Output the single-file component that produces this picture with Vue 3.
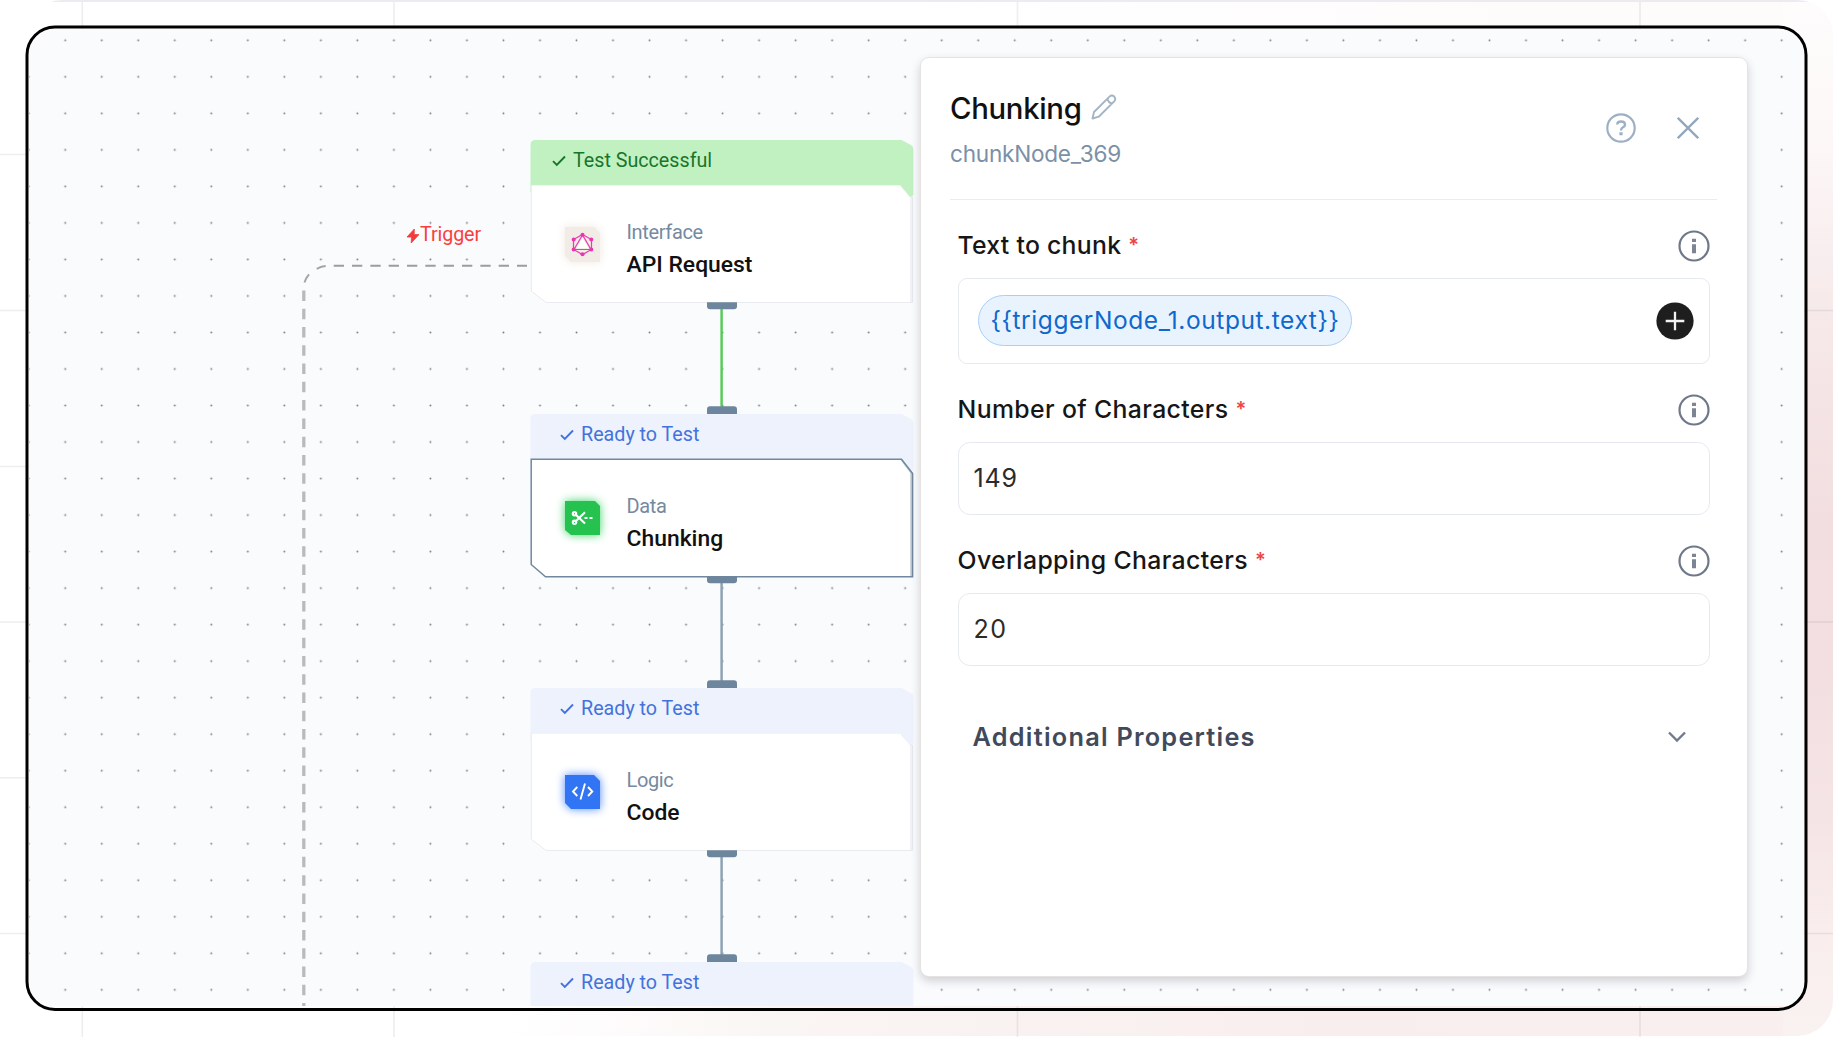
<script setup>
const nodes = [
  { id: 'api', top: 140, status: 'Test Successful', state: 'success', category: 'Interface', title: 'API Request', icon: 'graph' },
  { id: 'chunk', top: 414, status: 'Ready to Test', state: 'ready', category: 'Data', title: 'Chunking', icon: 'cut', selected: true },
  { id: 'code', top: 688, status: 'Ready to Test', state: 'ready', category: 'Logic', title: 'Code', icon: 'code' },
  { id: 'next', top: 962, status: 'Ready to Test', state: 'ready' },
]
const edges = [
  { y: 302, color: '#5acb5b' },
  { y: 576, color: '#8ea2b4' },
  { y: 850, color: '#8ea2b4' },
]
const variable = '{{triggerNode_1.output.text}}'
const fields = [
  { id: 'count', label: 'Number of Characters', value: '149' },
  { id: 'overlap', label: 'Overlapping Characters', value: '20' },
]
</script>

<template>
  <main class="page">
    <div class="section-glow"></div>
    <svg class="page-grid" width="1833" height="1037">
      <path d="M82.300 2V1037M394 2V1037M1017.500 2V1037M1640 2V1037" stroke="#0f0f1a" stroke-opacity=".07" stroke-width="1.600" />
      <path d="M0 154.500H40M0 310.500H1833M0 466.500H40M0 622H1833M0 777.700H40M0 933.500H1833" stroke="#0f0f1a" stroke-opacity=".07" stroke-width="1.400" />
    </svg>

    <section class="frame">
      <div class="canvas">
        <svg class="wires" width="1775" height="977" viewBox="29 29 1775 977">
          <defs>
            <pattern id="dots" x="10.450" y="22.050" width="36.520" height="36.520" patternUnits="userSpaceOnUse">
              <circle cx="18.260" cy="18.260" r=".95" fill="#7b7d81" />
            </pattern>
          </defs>
          <rect x="29" y="29" width="1775" height="977" fill="url(#dots)" />
          <path d="M333.700 265.800H527" stroke="#9c9da0" stroke-width="2" stroke-dasharray="10.300 8.030" />
          <path d="M316.700 268.800L320 267.300Q322.500 266.300 325.700 266M304.500 282.500Q305.800 278 309 274.300" stroke="#a4a5a8" stroke-width="2" fill="none" />
          <path d="M303.800 290.500V1006" stroke="#b9babc" stroke-width="3.300" stroke-dasharray="10.500 7.770" />
        </svg>

        <div class="trigger">
          <svg width="12" height="14" viewBox="0 0 12 14"><path d="M7.300 0L0 8H4.500L4.200 14L12 5.600H7.200Z" fill="#f43b3b" stroke="#f43b3b" stroke-width=".8" /></svg>
          <span>Trigger</span>
        </div>

        <article v-for="n in nodes" :key="n.id" class="node" :class="n.state" :style="{ top: n.top - 29 + 'px' }">
          <svg class="shape" width="386" height="166" viewBox="0 0 386 166">
            <path class="head-fill" :d="n.title ? 'M.5 52V5Q.5 0 5.500 0H371.500L381 5Q383.300 6.500 383.300 9V54Q383 57 380 57L370 45Z' : 'M.5 60V5Q.5 0 5.500 0H371.500L381 5Q383.300 6.500 383.300 9V60Z'" />
            <template v-if="n.title">
              <path v-if="!n.selected" d="M1.300 45.500V151L16 162.300H382.500V57L379.700 57L370 45.500Z" fill="#f1f2f5" stroke="#e6e8eb" stroke-width="1" />
              <path v-if="!n.selected" d="M1.800 45.500H370L380 57.300V162H16L1.800 151Z" fill="#fff" />
              <template v-else>
                <path d="M370 45H372L383 59V163H379Z" fill="#c3ced8" />
                <path d="M1.500 45.200H370L380.200 59V162H16L1.500 150Z" fill="#fff" />
                <path d="M1.200 45.200H371.500L382.600 59.500V162.800H15.500L1.200 150.500Z" fill="none" stroke="#71889e" stroke-width="1.500" />
              </template>
            </template>
          </svg>
          <header class="status">
            <svg width="14" height="12" viewBox="0 0 14 12" fill="none"><path d="M1 6.200L4.800 10L13 1.500" stroke="currentColor" stroke-width="1.900" /></svg>
            <span>{{ n.status }}</span>
          </header>
          <div v-if="n.title" class="body">
            <span class="tile" :class="n.icon">
              <svg v-if="n.icon === 'graph'" width="35" height="35" viewBox="0 0 35 35">
                <path d="M0 0H29L35 6V35H6L0 29Z" fill="#f1ece6" />
                <path d="M17.500 7.500L26.500 12.500V22.500L17.500 27.500L8.500 22.500V12.500ZM17.500 8L9 22.500H26Z" fill="none" stroke="#ea3bb2" stroke-width="1.200" />
                <path d="M17.500 11L23.500 21H11.500Z" fill="#fff" />
                <g fill="#ea35b0"><circle cx="17.500" cy="7.800" r="2" /><circle cx="26.300" cy="12.600" r="2" /><circle cx="26.300" cy="22.400" r="2" /><circle cx="17.500" cy="27.200" r="2" /><circle cx="8.700" cy="22.400" r="2" /><circle cx="8.700" cy="12.600" r="2" /></g>
              </svg>
              <svg v-else-if="n.icon === 'cut'" width="35" height="34" viewBox="0 0 35 34">
                <path d="M0 0H30L35 5V34H6L0 29Z" fill="#26c24f" />
                <g fill="none" stroke="#fff" stroke-width="2.100">
                  <circle cx="9.500" cy="12.700" r="1.700" /><circle cx="9.500" cy="21.300" r="1.700" />
                  <path d="M11 14L20 22.500M11 20L20 11.200M19.500 17H22.500M24.500 17H27.500" />
                </g>
              </svg>
              <svg v-else width="35" height="34" viewBox="0 0 35 34">
                <path d="M0 0H29L35 6V34H6L0 28Z" fill="#3175f5" />
                <path d="M12.300 12L8 16.500L12.300 21M23 12L27.300 16.500L23 21M20 8.500L15.500 24.500" fill="none" stroke="#fff" stroke-width="1.900" />
              </svg>
            </span>
            <div class="names">
              <span class="category">{{ n.category }}</span>
              <strong class="title">{{ n.title }}</strong>
            </div>
          </div>
        </article>

        <svg class="links" width="1775" height="977" viewBox="29 29 1775 977">
          <g v-for="e in edges" :key="e.y">
            <path :d="`M721.600 ${e.y + 6}v100`" :stroke="e.color" stroke-width="2.500" />
            <path :d="`M707 ${e.y + .3}h30v4q0 3-3 3h-24q-3 0-3-3z`" fill="#6d869d" />
            <path :d="`M707 ${e.y + 112}v-4.500q0-3.300 3-3.300h24q3 0 3 3.300v4.500z`" fill="#6d869d" />
          </g>
        </svg>
      </div>

      <aside class="panel">
        <header class="panel-head">
          <div>
            <h1>Chunking
              <svg width="26" height="26" viewBox="0 0 26 26" fill="none" stroke="#a3b4c5" stroke-width="1.900" stroke-linejoin="round"><path d="M1.500 24.500L3 18L18.500 2.600Q20.800.6 23.200 2.600Q25.300 5 23.200 7.400L7.700 22.700ZM16.500 4.800Q17.500 9.300 21.200 9.400" /></svg>
            </h1>
            <p>chunkNode_369</p>
          </div>
          <div class="actions">
            <svg width="30" height="30" viewBox="0 0 30 30" fill="none" stroke="#9db0c3"><circle cx="15" cy="15" r="13.700" stroke-width="2.200" /><path d="M11.200 11.500Q11.400 8.500 15 8.500Q19 8.500 19 11.700Q19 13.300 17 14.300Q15 15.300 15 17.500" stroke-width="2.400" /><path d="M15 19.200V22.200" stroke-width="3.200" /></svg>
            <svg width="22" height="22" viewBox="0 0 22 22"><path d="M.8.8L21.200 21.200M21.200.8L.8 21.200" stroke="#93a8bd" stroke-width="2.300" /></svg>
          </div>
        </header>

        <div class="form">
          <div class="field">
            <div class="label text-label"><span>Text to chunk</span><i>*</i>
              <svg class="info" width="32" height="32" viewBox="0 0 32 32"><circle cx="16" cy="16" r="14.500" fill="none" stroke="#6f7889" stroke-width="2.200" /><path d="M14 8.800h4v3.200h-4zM14 14.200h4v9h-4z" fill="#7d8594" /></svg>
            </div>
            <div class="input token-input">
              <span class="token">{{ variable }}</span>
              <svg width="38" height="38" viewBox="0 0 38 38"><circle cx="19" cy="19" r="18.600" fill="#1e1e1e" /><path d="M19 9.700V28.300M9.700 19H28.300" stroke="#f2f2f2" stroke-width="2.300" /></svg>
            </div>
          </div>
          <div v-for="f in fields" :key="f.id" class="field">
            <div class="label"><span>{{ f.label }}</span><i>*</i>
              <svg class="info" width="32" height="32" viewBox="0 0 32 32"><circle cx="16" cy="16" r="14.500" fill="none" stroke="#6f7889" stroke-width="2.200" /><path d="M14 8.800h4v3.200h-4zM14 14.200h4v9h-4z" fill="#7d8594" /></svg>
            </div>
            <div class="input" :class="f.id">{{ f.value }}</div>
          </div>
          <div class="more">
            <span>Additional Properties</span>
            <svg width="18" height="12" viewBox="0 0 18 12"><path d="M1 1.500L9 9.500L17 1.500" fill="none" stroke="#727b8b" stroke-width="2.400" /></svg>
          </div>
        </div>
      </aside>
    </section>
    <svg class="page-grid" width="1833" height="1037">
      <rect x="27" y="27" width="1779" height="982.500" rx="28" fill="none" stroke="#000" stroke-width="3" />
    </svg>
  </main>
</template>

<style>
body { background: #fff; overflow: hidden; }
</style>

<style scoped>
* { box-sizing: border-box; }
svg { display: block; flex: none; }
.page {
  position: relative;
  width: 1833px;
  height: 1037px;
  overflow: hidden;
  padding: 26px;
  font-family: Inter, sans-serif;
}
.section-glow {
  position: absolute;
  inset: 0 0 1px 26px;
  border-radius: 36px;
  background-image:
    linear-gradient(#ecebf2, #ecebf2),
    linear-gradient(180deg, #fefcfc 0, #fdf8f8 130px, #f8edee 260px, #f5e5e6 370px, #f2dee0 520px, #f2dfe1 690px, #f5e4e6 820px, #f9eded 930px, #f9f2f1 1030px),
    linear-gradient(90deg, #fff 0, #fff 480px, #faf4f4 800px, #f9eeee 1300px, #f9efef 1700px),
    linear-gradient(90deg, #fff 900px, #fefbfb 1500px);
  background-size: 100% 2px, 50px 100%, 100% 50px, 100% 50px;
  background-position: left top, right top, left bottom, left top;
  background-repeat: no-repeat;
}
.page-grid { position: absolute; inset: 0; pointer-events: none; }
.frame {
  position: relative;
  width: 1781px;
  height: 985px;
  border: 3px solid transparent;
  border-radius: 29px;
  overflow: hidden;
  padding: 28px 56px 0 0;
}
.canvas {
  position: absolute;
  inset: 0 0 2px 0;
  background: #fafbfd;
  overflow: hidden;
}
.wires, .links { position: absolute; inset: 0; }
.trigger {
  position: absolute;
  left: 378px;
  top: 194px;
  display: flex;
  align-items: center;
  gap: 1px;
  font: 400 19.700px/24px Roboto, sans-serif;
  letter-spacing: -.1px;
  color: #fa3e3e;
}
.trigger svg { margin-top: 1px; }
.node {
  position: absolute;
  left: 501px;
  width: 386px;
  font-family: Roboto, sans-serif;
}
.shape { position: absolute; left: 0; top: 0; overflow: visible; }
.success .head-fill { fill: #c1f1c1; }
.ready .head-fill { fill: #edf2fd; }
.status {
  position: relative;
  display: flex;
  height: 45px;
  padding: 9px 0 0 30px;
  gap: 7px;
  font-size: 19.700px;
  line-height: 24px;
  color: #4472dc;
}
.status svg { margin-top: 6px; }
.success .status { padding-left: 22px; color: #19752b; }
.body { position: relative; display: flex; padding: 41.500px 0 0 34.500px; gap: 27px; }
.tile { height: 35px; }
.graph { filter: drop-shadow(0 0 4px #efe8df); }
.cut { filter: drop-shadow(0 0 5px #3ed568); }
.code { filter: drop-shadow(0 0 5px #4f8aff); }
.names { display: flex; flex-direction: column; margin-top: -7.500px; }
.category { font-size: 20px; line-height: 26px; letter-spacing: -.35px; color: #748aa1; }
.title { font-size: 22.900px; line-height: 30px; font-weight: 500; color: #111; margin-top: 5px; }
.panel {
  position: relative;
  width: 828px;
  height: 920px;
  margin-left: auto;
  padding: 32px 30px 0 29px;
  border: 1px solid #e7e3e3;
  border-radius: 9px;
  background: #fff;
  box-shadow: 0 4px 10px rgba(30, 40, 50, .2);
}
.panel-head {
  display: flex;
  justify-content: space-between;
  height: 110px;
  border-bottom: 1px solid #f0ebe7;
}
h1 {
  display: flex;
  gap: 9px;
  margin: 0;
  font-size: 29.300px;
  line-height: 38px;
  font-weight: 500;
  letter-spacing: -.3px;
  color: #111;
}
h1 svg { margin-top: 4px; }
.panel-head p { margin: 12px 0 0; font-size: 22.600px; line-height: 28px; letter-spacing: -.25px; color: #7b90a6; }
.actions { display: flex; align-items: center; gap: 40.500px; height: 76px; padding-right: 18.500px; }
.form { padding: 0 7px 0 7.500px; }
.label {
  display: flex;
  align-items: center;
  height: 32px;
  font-size: 24.800px;
  font-weight: 500;
  letter-spacing: .37px;
  color: #161616;
}
.label span { margin-top: -3px; }
.text-label { letter-spacing: .27px; }
.label i { margin: -3px 0 0 7px; font-style: normal; font-size: 20px; font-weight: 600; color: #f04444; }
.info { margin-left: auto; }
.field:first-child { padding-top: 30px; }
.field + .field { padding-top: 30px; }
.input {
  display: flex;
  align-items: center;
  height: 73px;
  margin-top: 16px;
  padding: 0 0 1px 15px;
  border: 1px solid #e6eaf0;
  border-radius: 12px;
  font-size: 25px;
  letter-spacing: .9px;
  color: #2b2b2b;
}
.overlap { letter-spacing: 1.500px; }
.token-input { justify-content: space-between; height: 86px; border-radius: 9px; padding: 0 15px 0 19px; }
.token {
  width: 374px;
  height: 51px;
  margin-top: -2px;
  padding-left: 12px;
  border: 1px solid #a8cffc;
  border-radius: 26px;
  background: #e8f3fe;
  font-size: 24.500px;
  line-height: 49px;
  letter-spacing: .57px;
  color: #0f68cc;
}
.more {
  display: flex;
  align-items: center;
  justify-content: space-between;
  margin-top: 55px;
  padding: 0 24px 0 15px;
  font-size: 25.300px;
  line-height: 32px;
  font-weight: 600;
  letter-spacing: 1.250px;
  color: #414a5b;
}
</style>
